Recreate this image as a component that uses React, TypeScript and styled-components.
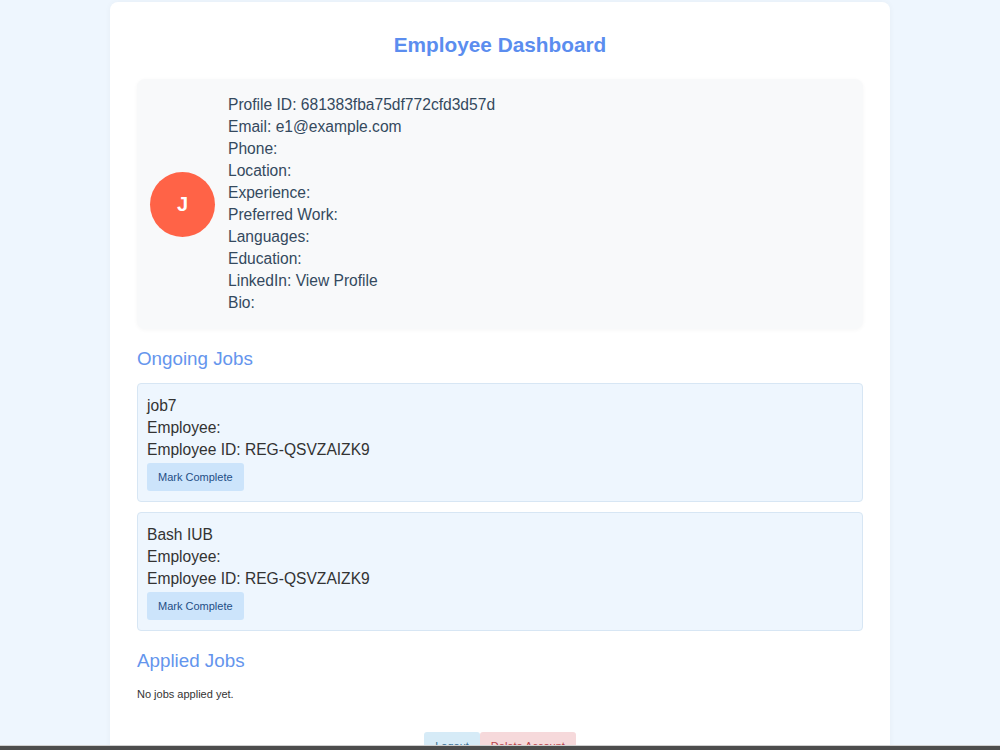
import React from 'react';
import styled, { createGlobalStyle } from 'styled-components';

const GlobalStyle = createGlobalStyle`
  body {
    margin: 0;
    background: #eef6fe;
    font-family: 'Liberation Sans', Arial, sans-serif;
  }
`;

interface IJob {
  title: string;
  employee: string;
  employeeId: string;
}

const ongoingJobs: IJob[] = [
  { title: 'job7', employee: '', employeeId: 'REG-QSVZAIZK9' },
  { title: 'Bash IUB', employee: '', employeeId: 'REG-QSVZAIZK9' },
];

const profileRows: [string, string][] = [
  ['Profile ID', '681383fba75df772cfd3d57d'],
  ['Email', 'e1@example.com'],
  ['Phone', ''],
  ['Location', ''],
  ['Experience', ''],
  ['Preferred Work', ''],
  ['Languages', ''],
  ['Education', ''],
  ['LinkedIn', 'View Profile'],
  ['Bio', ''],
];

export default function App(): React.ReactElement {
  return (
    <>
      <GlobalStyle />
      <Wrapper>
        <Title>Employee Dashboard</Title>
        <ProfileCard>
          <Avatar>J</Avatar>
          <ProfileInfo>
            {profileRows.map(([label, value]) => (
              <Line key={label}>
                {label}: {value}
              </Line>
            ))}
          </ProfileInfo>
        </ProfileCard>

        <SectionTitle>Ongoing Jobs</SectionTitle>
        {ongoingJobs.map((job, i) => (
          <JobCard key={i}>
            <JobLine>{job.title}</JobLine>
            <JobLine>Employee: {job.employee}</JobLine>
            <JobLine>Employee ID: {job.employeeId}</JobLine>
            <SmallButton $tone="blue">Mark Complete</SmallButton>
          </JobCard>
        ))}

        <SectionTitle>Applied Jobs</SectionTitle>
        <Empty>No jobs applied yet.</Empty>

        <Actions>
          <SmallButton $tone="sky" $flat>Logout</SmallButton>
          <SmallButton $tone="red" $flat>Delete Account</SmallButton>
        </Actions>
      </Wrapper>
      <BottomBar />
    </>
  );
}

const Wrapper = styled.div`
  width: 780px;
  box-sizing: border-box;
  margin: 2px auto 0;
  padding: 31px 27px 40px;
  background: #ffffff;
  border-radius: 8px;
  box-shadow: 0 0 6px rgba(0, 0, 0, 0.04);
`;

const Title = styled.h1`
  margin: 0 0 23px;
  text-align: center;
  font-size: 20.8px;
  line-height: 23px;
  font-weight: bold;
  color: #5b8def;
`;

const ProfileCard = styled.div`
  display: flex;
  align-items: center;
  gap: 13px;
  padding: 15px 13px;
  background: #f8f9fa;
  border-radius: 8px;
  box-shadow: 0 1px 4px rgba(0, 0, 0, 0.04);
`;

const Avatar = styled.div`
  width: 65px;
  height: 65px;
  flex-shrink: 0;
  border-radius: 50%;
  background: #ff6347;
  color: #ffffff;
  font-size: 20px;
  font-weight: bold;
  display: flex;
  align-items: center;
  justify-content: center;
`;

const ProfileInfo = styled.div`
  display: flex;
  flex-direction: column;
`;

const Line = styled.div`
  font-size: 15.6px;
  line-height: 22px;
  color: #34495e;
`;

const SectionTitle = styled.h2`
  margin: 19px 0 13px;
  font-size: 18.8px;
  line-height: 22px;
  font-weight: normal;
  color: #6495ed;
`;

const JobCard = styled.div`
  padding: 11px 9px 10px;
  margin-bottom: 10px;
  background: #eef6fe;
  border: 1px solid #d7e6f4;
  border-radius: 4px;
`;

const JobLine = styled.div`
  font-size: 15.6px;
  line-height: 22px;
  color: #333333;
`;

const tones = {
  blue: { bg: '#cce4fb', fg: '#1f4e86' },
  sky: { bg: '#d6ebf7', fg: '#3a6f92' },
  red: { bg: '#f6d9db', fg: '#b9434a' },
};

const SmallButton = styled.button<{ $tone: keyof typeof tones; $flat?: boolean }>`
  margin-top: ${(p) => (p.$flat ? '0' : '2px')};
  height: 28px;
  padding: 0 11px;
  border: none;
  border-radius: 3px;
  font-family: 'Liberation Sans', Arial, sans-serif;
  font-size: 11px;
  background: ${(p) => tones[p.$tone].bg};
  color: ${(p) => tones[p.$tone].fg};
  cursor: pointer;
`;

const Empty = styled.div`
  font-size: 11px;
  color: #333333;
  margin-top: 16px;
`;

const Actions = styled.div`
  display: flex;
  justify-content: center;
  margin-top: 32px;
`;

const BottomBar = styled.div`
  position: fixed;
  left: 0;
  right: 0;
  bottom: 0;
  height: 4px;
  background: #4d4d4d;
  border-top: 1px solid #d0d0d0;
`;
